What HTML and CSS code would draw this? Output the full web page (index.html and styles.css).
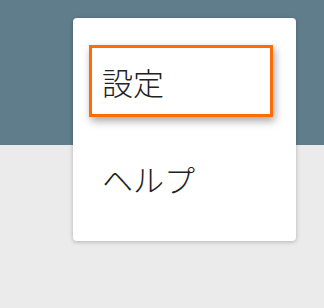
FILE: index.html
```html
<!DOCTYPE html>
<html lang="ja">
<head>
<meta charset="utf-8">
<link rel="stylesheet" href="styles.css">
</head>
<body>
<div class="header"></div>
<div class="menu">
  <div class="item focused">設定</div>
  <div class="item">ヘルプ</div>
</div>
</body>
</html>
```
FILE: styles.css
```css
html, body {
  margin: 0;
  padding: 0;
}
body {
  width: 324px;
  height: 308px;
  background: #ebebeb;
  position: relative;
  overflow: hidden;
  font-family: "Noto Sans CJK JP", "Noto Sans", sans-serif;
}
.header {
  height: 145px;
  background: #607d8b;
}
.menu {
  position: absolute;
  left: 73px;
  top: 18px;
  width: 223px;
  height: 223px;
  box-sizing: border-box;
  background: #fff;
  border-radius: 4px;
  box-shadow: 0 1px 4px rgba(0,0,0,0.25);
  padding: 27px 23px 27px 16px;
  display: flex;
  flex-direction: column;
  gap: 25px;
}
.item {
  height: 72px;
  box-sizing: border-box;
  border: 3px solid transparent;
  padding-left: 10px;
  display: flex;
  align-items: center;
  font-size: 31px;
  font-weight: 300;
  color: #222;
}
.item.focused {
  border-color: #ff6d00;
  box-shadow: 2px 4px 8px rgba(0,0,0,0.35);
}
```
